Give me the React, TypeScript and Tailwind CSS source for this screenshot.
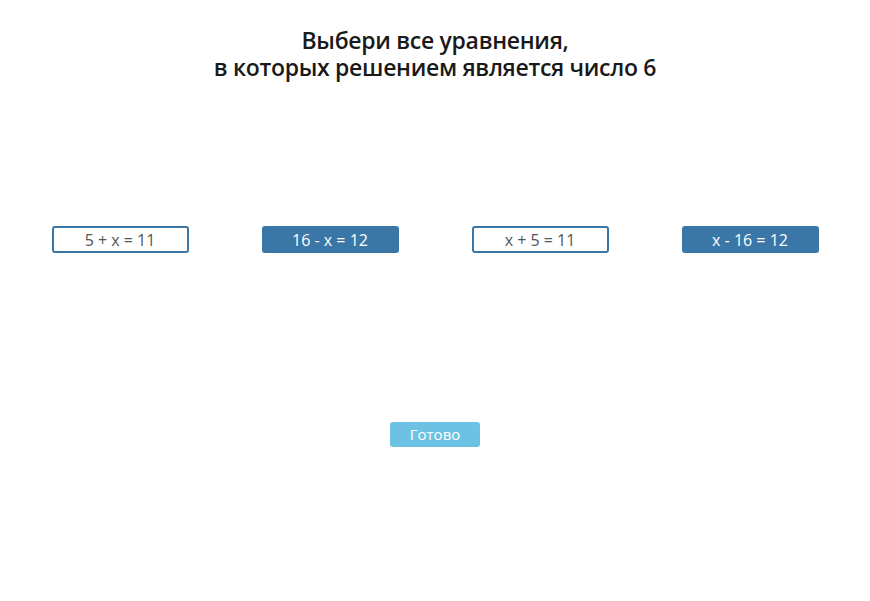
import React from 'react';

const options = [
  { label: '5 + x = 11', selected: false },
  { label: '16 - x = 12', selected: true },
  { label: 'x + 5 = 11', selected: false },
  { label: 'x - 16 = 12', selected: true },
];

export default function App() {
  return (
    <div
      className="flex h-[601px] w-[870px] flex-col items-center bg-white"
      style={{ fontFamily: '"Open Sans", "Noto Sans", sans-serif' }}
    >
      <h1 className="mt-[27px] flex flex-col items-center text-center text-[23px] font-semibold leading-[27px] tracking-[-0.3px] text-[#1a1a1a]">
        <span>Выбери все уравнения,</span>
        <span>в которых решением является число 6</span>
      </h1>

      <div className="mt-[145px] grid w-full grid-cols-4 px-[15px]">
        {options.map((o) => (
          <div key={o.label} className="flex justify-center">
            <button
              className={
                o.selected
                  ? 'h-[27px] w-[137px] rounded-[3px] border-2 border-[#3a76a6] bg-[#3a76a6] text-[16px] text-white'
                  : 'h-[27px] w-[137px] rounded-[3px] border-2 border-[#3a76a6] bg-white text-[16px] text-[#555]'
              }
            >
              {o.label}
            </button>
          </div>
        ))}
      </div>

      <button className="mt-[169px] h-[25px] w-[90px] rounded-[3px] bg-[#6dc2e3] text-[15px] text-white">
        Готово
      </button>
    </div>
  );
}
